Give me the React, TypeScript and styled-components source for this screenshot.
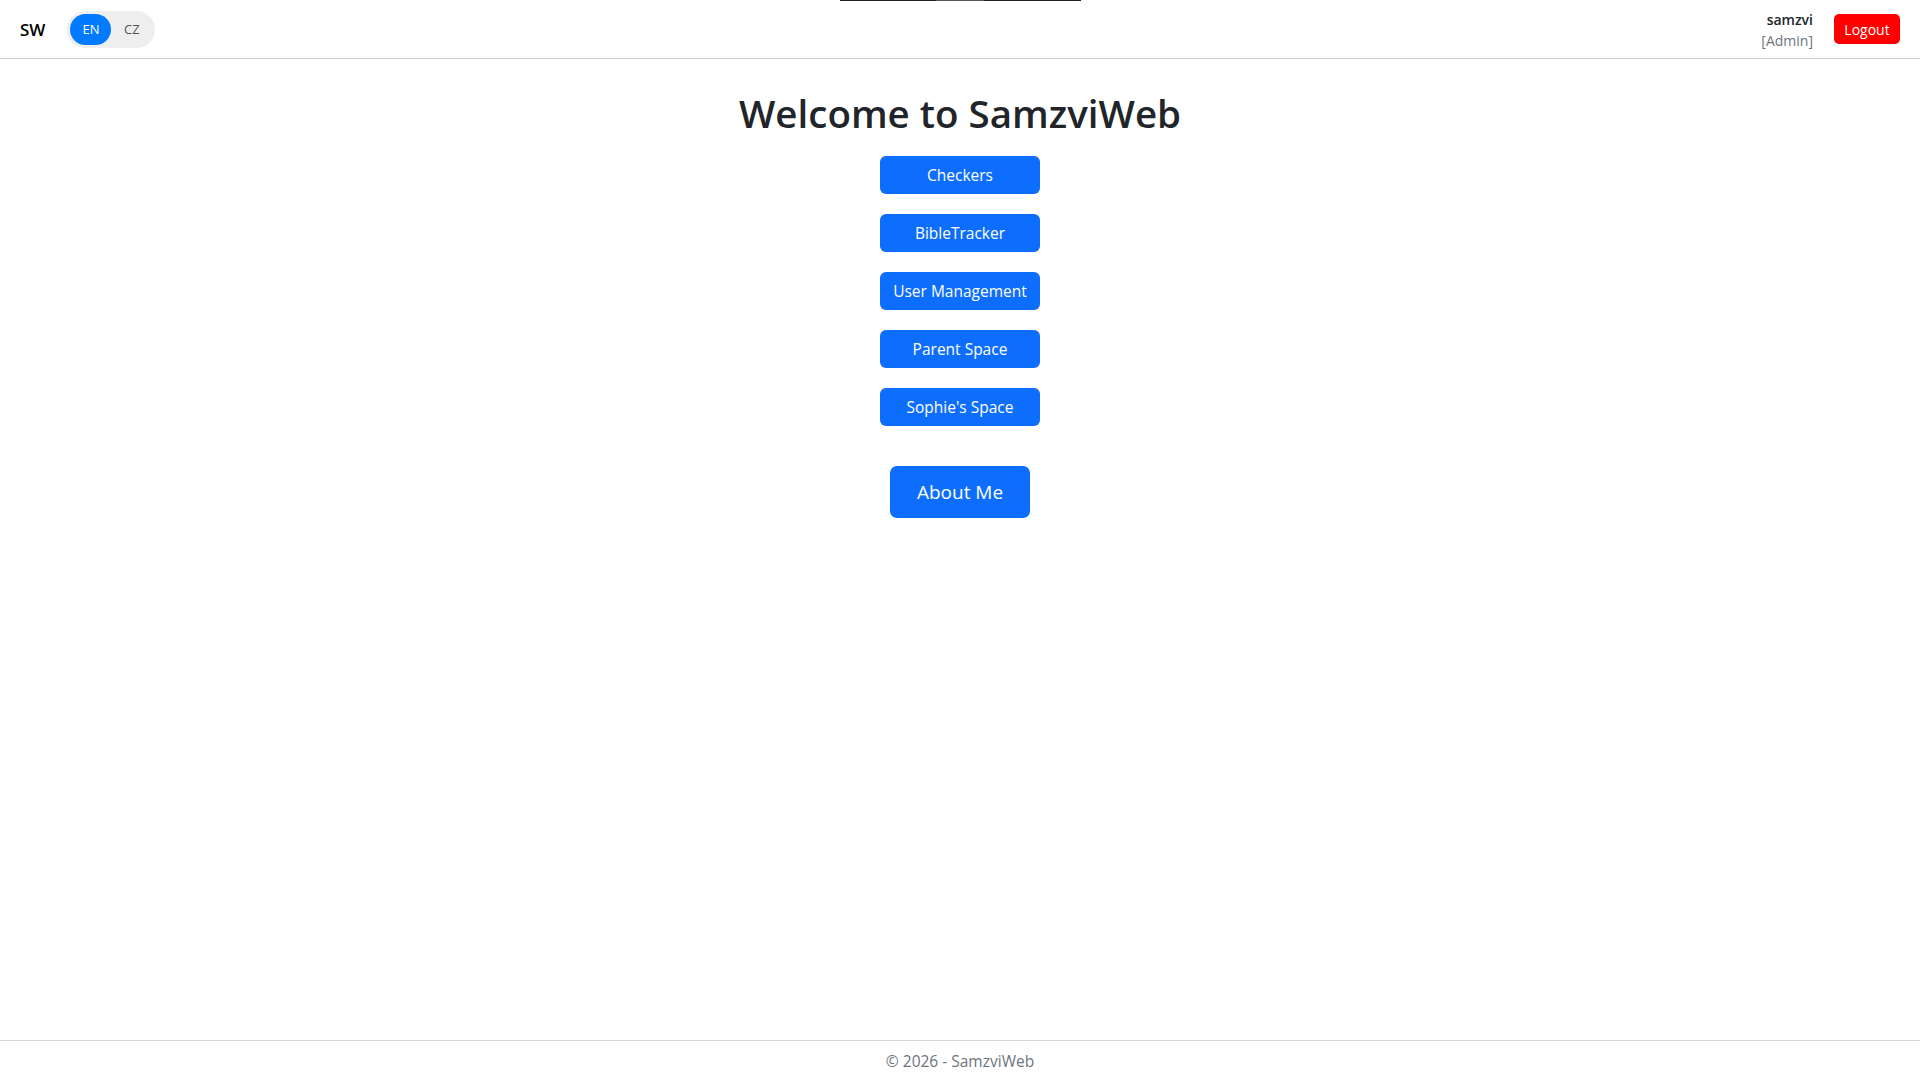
import React from "react";
import styled, { createGlobalStyle } from "styled-components";

const GlobalStyle = createGlobalStyle`
  html, body { margin: 0; padding: 0; background: #fff; }
  body { font-family: "Open Sans", "Noto Sans", sans-serif; color: #212529; }
  * { box-sizing: border-box; }
`;

const Page = styled.div`
  min-height: 100vh;
  display: flex;
  flex-direction: column;
  position: relative;
`;

const TopBar = styled.div`
  position: absolute;
  top: 0;
  left: 840px;
  width: 241px;
  height: 1px;
  display: flex;
`;

const TopBarSeg = styled.div<{ $w: number; $c: string }>`
  width: ${(p) => p.$w}px;
  background: ${(p) => p.$c};
`;

const Header = styled.header`
  height: 59px;
  border-bottom: 1px solid #cfcfcf;
  display: flex;
  align-items: center;
  justify-content: space-between;
  padding: 0 20px;
`;

const Left = styled.div`
  display: flex;
  align-items: center;
  gap: 22px;
`;

const Brand = styled.div`
  font-size: 17px;
  font-weight: 600;
  color: #000;
`;

const Toggle = styled.div`
  display: flex;
  align-items: center;
  background: #eeeeee;
  border-radius: 19px;
  padding: 3px;
  height: 37px;
  width: 88px;
`;

const LangBtn = styled.button<{ $active?: boolean }>`
  border: none;
  height: 31px;
  width: 41px;
  border-radius: 16px;
  font-family: inherit;
  font-size: 13px;
  background: ${(p) => (p.$active ? "#007bff" : "transparent")};
  color: ${(p) => (p.$active ? "#fff" : "#555")};
  padding: 0;
  cursor: pointer;
`;

const Right = styled.div`
  display: flex;
  align-items: center;
  gap: 21px;
`;

const UserBox = styled.div`
  display: flex;
  flex-direction: column;
  align-items: flex-end;
  font-size: 14px;
  line-height: 21px;
  margin-top: 2px;
`;

const UserName = styled.span`
  font-weight: 600;
  color: #212529;
`;

const Role = styled.span`
  color: #6c757d;
`;

const LogoutBtn = styled.button`
  border: none;
  background: #ff0000;
  color: #fff;
  font-family: inherit;
  font-size: 14px;
  font-weight: 500;
  height: 30px;
  width: 66px;
  border-radius: 5px;
  padding: 0;
  cursor: pointer;
`;

const Main = styled.main`
  flex: 1;
  display: flex;
  flex-direction: column;
  align-items: center;
`;

const Title = styled.h1`
  font-size: 38.5px;
  font-weight: 600;
  line-height: 48px;
  margin: 30px 0 19px;
  color: #212529;
`;

const NavList = styled.div`
  display: flex;
  flex-direction: column;
  align-items: center;
  gap: 20px;
`;

const NavBtn = styled.button<{ $large?: boolean }>`
  border: none;
  background: #0d6efd;
  color: #fff;
  font-family: inherit;
  width: ${(p) => (p.$large ? 140 : 160)}px;
  height: ${(p) => (p.$large ? 52 : 38)}px;
  font-size: ${(p) => (p.$large ? 19 : 15.5)}px;
  border-radius: ${(p) => (p.$large ? 7 : 6)}px;
  margin-top: ${(p) => (p.$large ? 20 : 0)}px;
  padding: 0;
  cursor: pointer;
`;

const Footer = styled.footer`
  height: 40px;
  border-top: 1px solid #d6d6d6;
  display: flex;
  align-items: center;
  justify-content: center;
  color: #6c757d;
  font-size: 15.5px;
`;

const items = ["Checkers", "BibleTracker", "User Management", "Parent Space", "Sophie's Space"];

export default function App() {
  return (
    <Page>
      <GlobalStyle />
      <TopBar>
        <TopBarSeg $w={96} $c="#222" />
        <TopBarSeg $w={48} $c="#555" />
        <TopBarSeg $w={97} $c="#222" />
      </TopBar>
      <Header>
        <Left>
          <Brand>SW</Brand>
          <Toggle>
            <LangBtn $active>EN</LangBtn>
            <LangBtn>CZ</LangBtn>
          </Toggle>
        </Left>
        <Right>
          <UserBox>
            <UserName>samzvi</UserName>
            <Role>[Admin]</Role>
          </UserBox>
          <LogoutBtn>Logout</LogoutBtn>
        </Right>
      </Header>
      <Main>
        <Title>Welcome to SamzviWeb</Title>
        <NavList>
          {items.map((t) => (
            <NavBtn key={t}>{t}</NavBtn>
          ))}
          <NavBtn $large>About Me</NavBtn>
        </NavList>
      </Main>
      <Footer>© 2026 - SamzviWeb</Footer>
    </Page>
  );
}
